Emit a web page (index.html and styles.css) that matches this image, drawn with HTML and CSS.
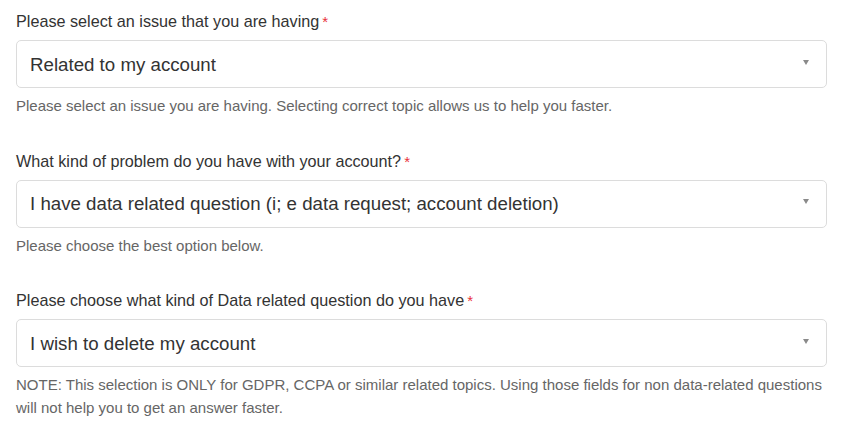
FILE: index.html
```html
<!DOCTYPE html>
<html lang="en">
<head>
<meta charset="utf-8">
<title>Request form</title>
<link rel="stylesheet" href="styles.css">
</head>
<body>
<form class="form">
  <div class="field">
    <label class="label">Please select an issue that you are having<span class="req">*</span></label>
    <div class="select"><span class="value">Related to my account</span><span class="arrow"></span></div>
    <p class="hint">Please select an issue you are having. Selecting correct topic allows us to help you faster.</p>
  </div>
  <div class="field">
    <label class="label">What kind of problem do you have with your account?<span class="req">*</span></label>
    <div class="select"><span class="value">I have data related question (i; e data request; account deletion)</span><span class="arrow"></span></div>
    <p class="hint">Please choose the best option below.</p>
  </div>
  <div class="field">
    <label class="label">Please choose what kind of Data related question do you have<span class="req">*</span></label>
    <div class="select"><span class="value">I wish to delete my account</span><span class="arrow"></span></div>
    <p class="hint">NOTE: This selection is ONLY for GDPR, CCPA or similar related topics. Using those fields for non data-related questions will not help you to get an answer faster.</p>
  </div>
</form>
</body>
</html>
```

FILE: styles.css
```css
html, body {
  margin: 0;
  padding: 0;
  background: #ffffff;
}
body {
  font-family: "Liberation Sans", Arial, sans-serif;
  color: #333333;
}
.form {
  width: 811px;
  padding: 10px 0 0 16px;
  display: flex;
  flex-direction: column;
  gap: 32.5px;
}
.field {
  display: flex;
  flex-direction: column;
}
.label {
  font-size: 16.2px;
  line-height: 22px;
  color: #333333;
  margin-bottom: 7px;
}
.req {
  color: #e8313b;
  margin-left: 3px;
  font-size: 15px;
}
.select {
  height: 48px;
  box-sizing: border-box;
  border: 1px solid #dcdcdc;
  border-radius: 5px;
  display: flex;
  align-items: center;
  justify-content: space-between;
  padding: 1px 17px 0 13px;
  background: #ffffff;
}
.value {
  font-size: 18.7px;
  color: #333333;
}
.arrow {
  width: 0;
  height: 0;
  border-left: 3.5px solid transparent;
  border-right: 3.5px solid transparent;
  border-top: 5px solid #8a8a8a;
  margin-top: -5px;
}
.hint {
  margin: 6px 0 0 0;
  font-size: 15px;
  line-height: 23px;
  color: #666666;
}
```
